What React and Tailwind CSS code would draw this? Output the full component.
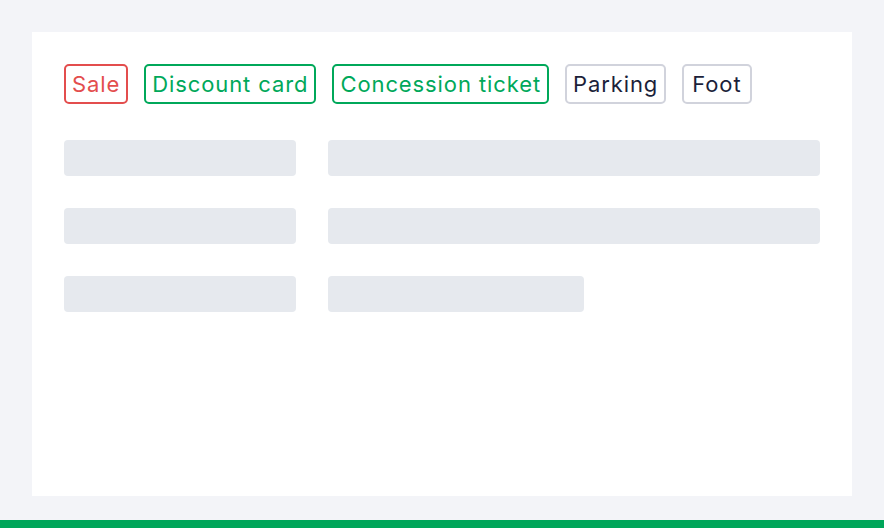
const TAGS = [
  { label: 'Sale', cls: 'border-[#e34d4d] text-[#e34d4d]' },
  { label: 'Discount card', cls: 'border-[#00a85a] text-[#00a85a]' },
  { label: 'Concession ticket', cls: 'border-[#00a85a] text-[#00a85a]' },
  { label: 'Parking', cls: 'border-[#d1d3dc] text-[#1c1f3a]' },
  { label: 'Foot', cls: 'border-[#d1d3dc] text-[#1c1f3a] px-[8px]' },
];

// widths of the right-hand skeleton bars per row
const ROWS = ['w-[492px]', 'w-[492px]', 'w-[256px]'];

export default function App() {
  return (
    <div className="w-[884px] h-[528px] bg-[#f3f4f8] flex flex-col font-['Inter',sans-serif]">
      <div className="h-[520px] shrink-0 px-8 pt-8">
        <div className="h-[464px] bg-white p-8">
          <div className="flex gap-4">
            {TAGS.map((t) => (
              <span
                key={t.label}
                className={`h-10 px-[6px] flex items-center border-2 rounded-[5px] text-[22px] tracking-[0.9px] leading-none ${t.cls}`}
              >
                {t.label}
              </span>
            ))}
          </div>
          <div className="mt-9 flex flex-col gap-8">
            {ROWS.map((w, i) => (
              <div key={i} className="flex gap-8">
                <div className="w-[232px] h-9 rounded-[4px] bg-[#e6e9ee]" />
                <div className={`${w} h-9 rounded-[4px] bg-[#e6e9ee]`} />
              </div>
            ))}
          </div>
        </div>
      </div>
      <div className="h-2 shrink-0 bg-[#00a65a]" />
    </div>
  );
}
